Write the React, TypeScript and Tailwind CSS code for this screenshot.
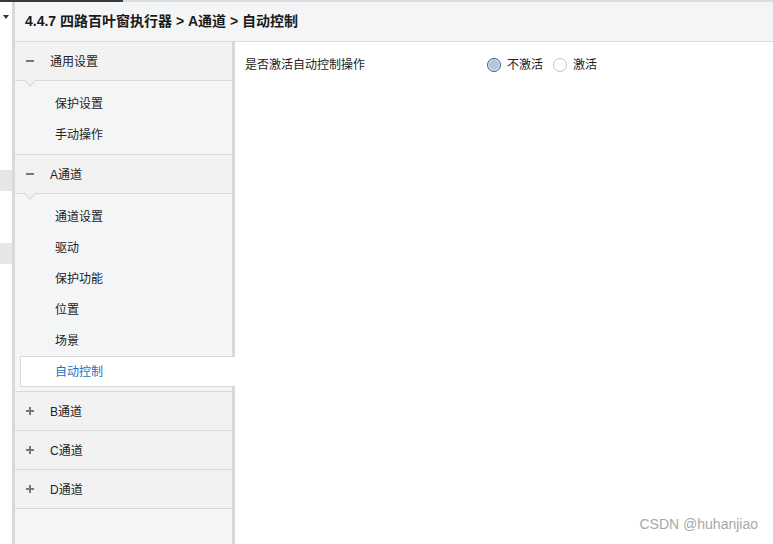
import React from 'react';

// Barre latérale : groupes et sous-éléments
interface Group {
  label: string;
  open: boolean;
  items: string[];
}

const groups: Group[] = [
  { label: '通用设置', open: true, items: ['保护设置', '手动操作'] },
  { label: 'A通道', open: true, items: ['通道设置', '驱动', '保护功能', '位置', '场景', '自动控制'] },
  { label: 'B通道', open: false, items: [] },
  { label: 'C通道', open: false, items: [] },
  { label: 'D通道', open: false, items: [] },
];

const ACTIVE = '自动控制';

const font = { fontFamily: '"Liberation Sans", "Noto Sans CJK SC", sans-serif' };

const GroupHeader: React.FC<{ group: Group }> = ({ group }) => (
  <div className="relative flex h-[39px] items-center border-b border-[#d9d9d9] bg-[#f2f2f2] text-[12px] text-[#222]">
    <span className="flex w-[35px] justify-start pl-[11px]">
      {group.open ? (
        <span className="block h-[2px] w-[8px] bg-[#777]" />
      ) : (
        <span className="relative block h-[8px] w-[8px]">
          <span className="absolute left-0 top-[3px] h-[2px] w-[8px] bg-[#777]" />
          <span className="absolute left-[3px] top-0 h-[8px] w-[2px] bg-[#777]" />
        </span>
      )}
    </span>
    <span className="pt-[2px]">{group.label}</span>
    {group.open && (
      <span className="absolute bottom-[-5px] left-[11px] h-[8px] w-[8px] rotate-45 border-b border-r border-[#d9d9d9] bg-[#f2f2f2]" />
    )}
  </div>
);

const Radio: React.FC<{ checked: boolean; label: string }> = ({ checked, label }) => (
  <label className="flex items-center gap-[6px]">
    {checked ? (
      <span className="block h-[14px] w-[14px] rounded-full border border-[#3b5f8f] bg-[#b3c5db] shadow-[inset_0_0_0_1px_#e6edf5]" />
    ) : (
      <span className="block h-[14px] w-[14px] rounded-full border border-[#c4c4c4] bg-white" />
    )}
    <span>{label}</span>
  </label>
);

export default function App() {
  return (
    <div className="relative flex h-[544px] w-[773px] overflow-hidden bg-white" style={font}>
      {/* bord de fenêtre */}
      <div className="absolute left-0 top-0 z-10 h-[2px] w-[123px] bg-[#3a3a3a]" />

      {/* bande de gauche */}
      <div className="flex w-[12px] flex-col">
        <div className="flex h-[21px] items-end pb-[2px] pl-[3px]">
          <span className="block h-0 w-0 border-x-[3px] border-t-[4px] border-x-transparent border-t-[#333]" />
        </div>
        <div className="h-[149px]" />
        <div className="h-[21px] bg-[#e6e6e6]" />
        <div className="h-[52px]" />
        <div className="h-[21px] bg-[#e6e6e6]" />
      </div>

      {/* panneau principal */}
      <div className="flex flex-1 flex-col border-l-[3px] border-[#d9d9d9]">
        <div className="flex h-[42px] items-center border-b border-t-2 border-[#dcdcdc] bg-[#f4f5f7] pl-[10px] text-[14px] font-bold text-[#1a1a1a]">
          4.4.7 四路百叶窗执行器 &gt; A通道 &gt; 自动控制
        </div>

        <div className="flex flex-1">
          {/* menu */}
          <div className="w-[220px] border-r-[3px] border-[#d9d9d9] bg-[#f4f5f7]">
            {groups.map(g => (
              <div key={g.label}>
                <GroupHeader group={g} />
                {g.open && (
                  <div className="border-b border-[#d9d9d9] pb-[4px] pt-[7px] text-[12px]">
                    {g.items.map(item =>
                      item === ACTIVE ? (
                        <div
                          key={item}
                          className="relative z-10 ml-[5px] mr-[-3px] flex h-[31px] items-center border border-r-0 border-[#d9d9d9] bg-white pl-[34px] text-[#1e6fc0]"
                        >
                          {item}
                        </div>
                      ) : (
                        <div key={item} className="flex h-[31px] items-center pl-[40px] text-[#222]">
                          {item}
                        </div>
                      )
                    )}
                  </div>
                )}
              </div>
            ))}
          </div>

          {/* contenu */}
          <div className="flex-1 bg-white">
            <div className="flex h-[45px] items-center pl-[10px] text-[12px] text-[#222]">
              <span className="w-[242px]">是否激活自动控制操作</span>
              <div className="flex items-center gap-[10px]">
                <Radio checked label="不激活" />
                <Radio checked={false} label="激活" />
              </div>
            </div>
          </div>
        </div>
      </div>

      <div className="absolute bottom-[9px] right-[15px] text-[14px] text-[#a8a8a8]" style={{ fontFamily: '"Liberation Sans", sans-serif' }}>
        CSDN @huhanjiao
      </div>
    </div>
  );
}
